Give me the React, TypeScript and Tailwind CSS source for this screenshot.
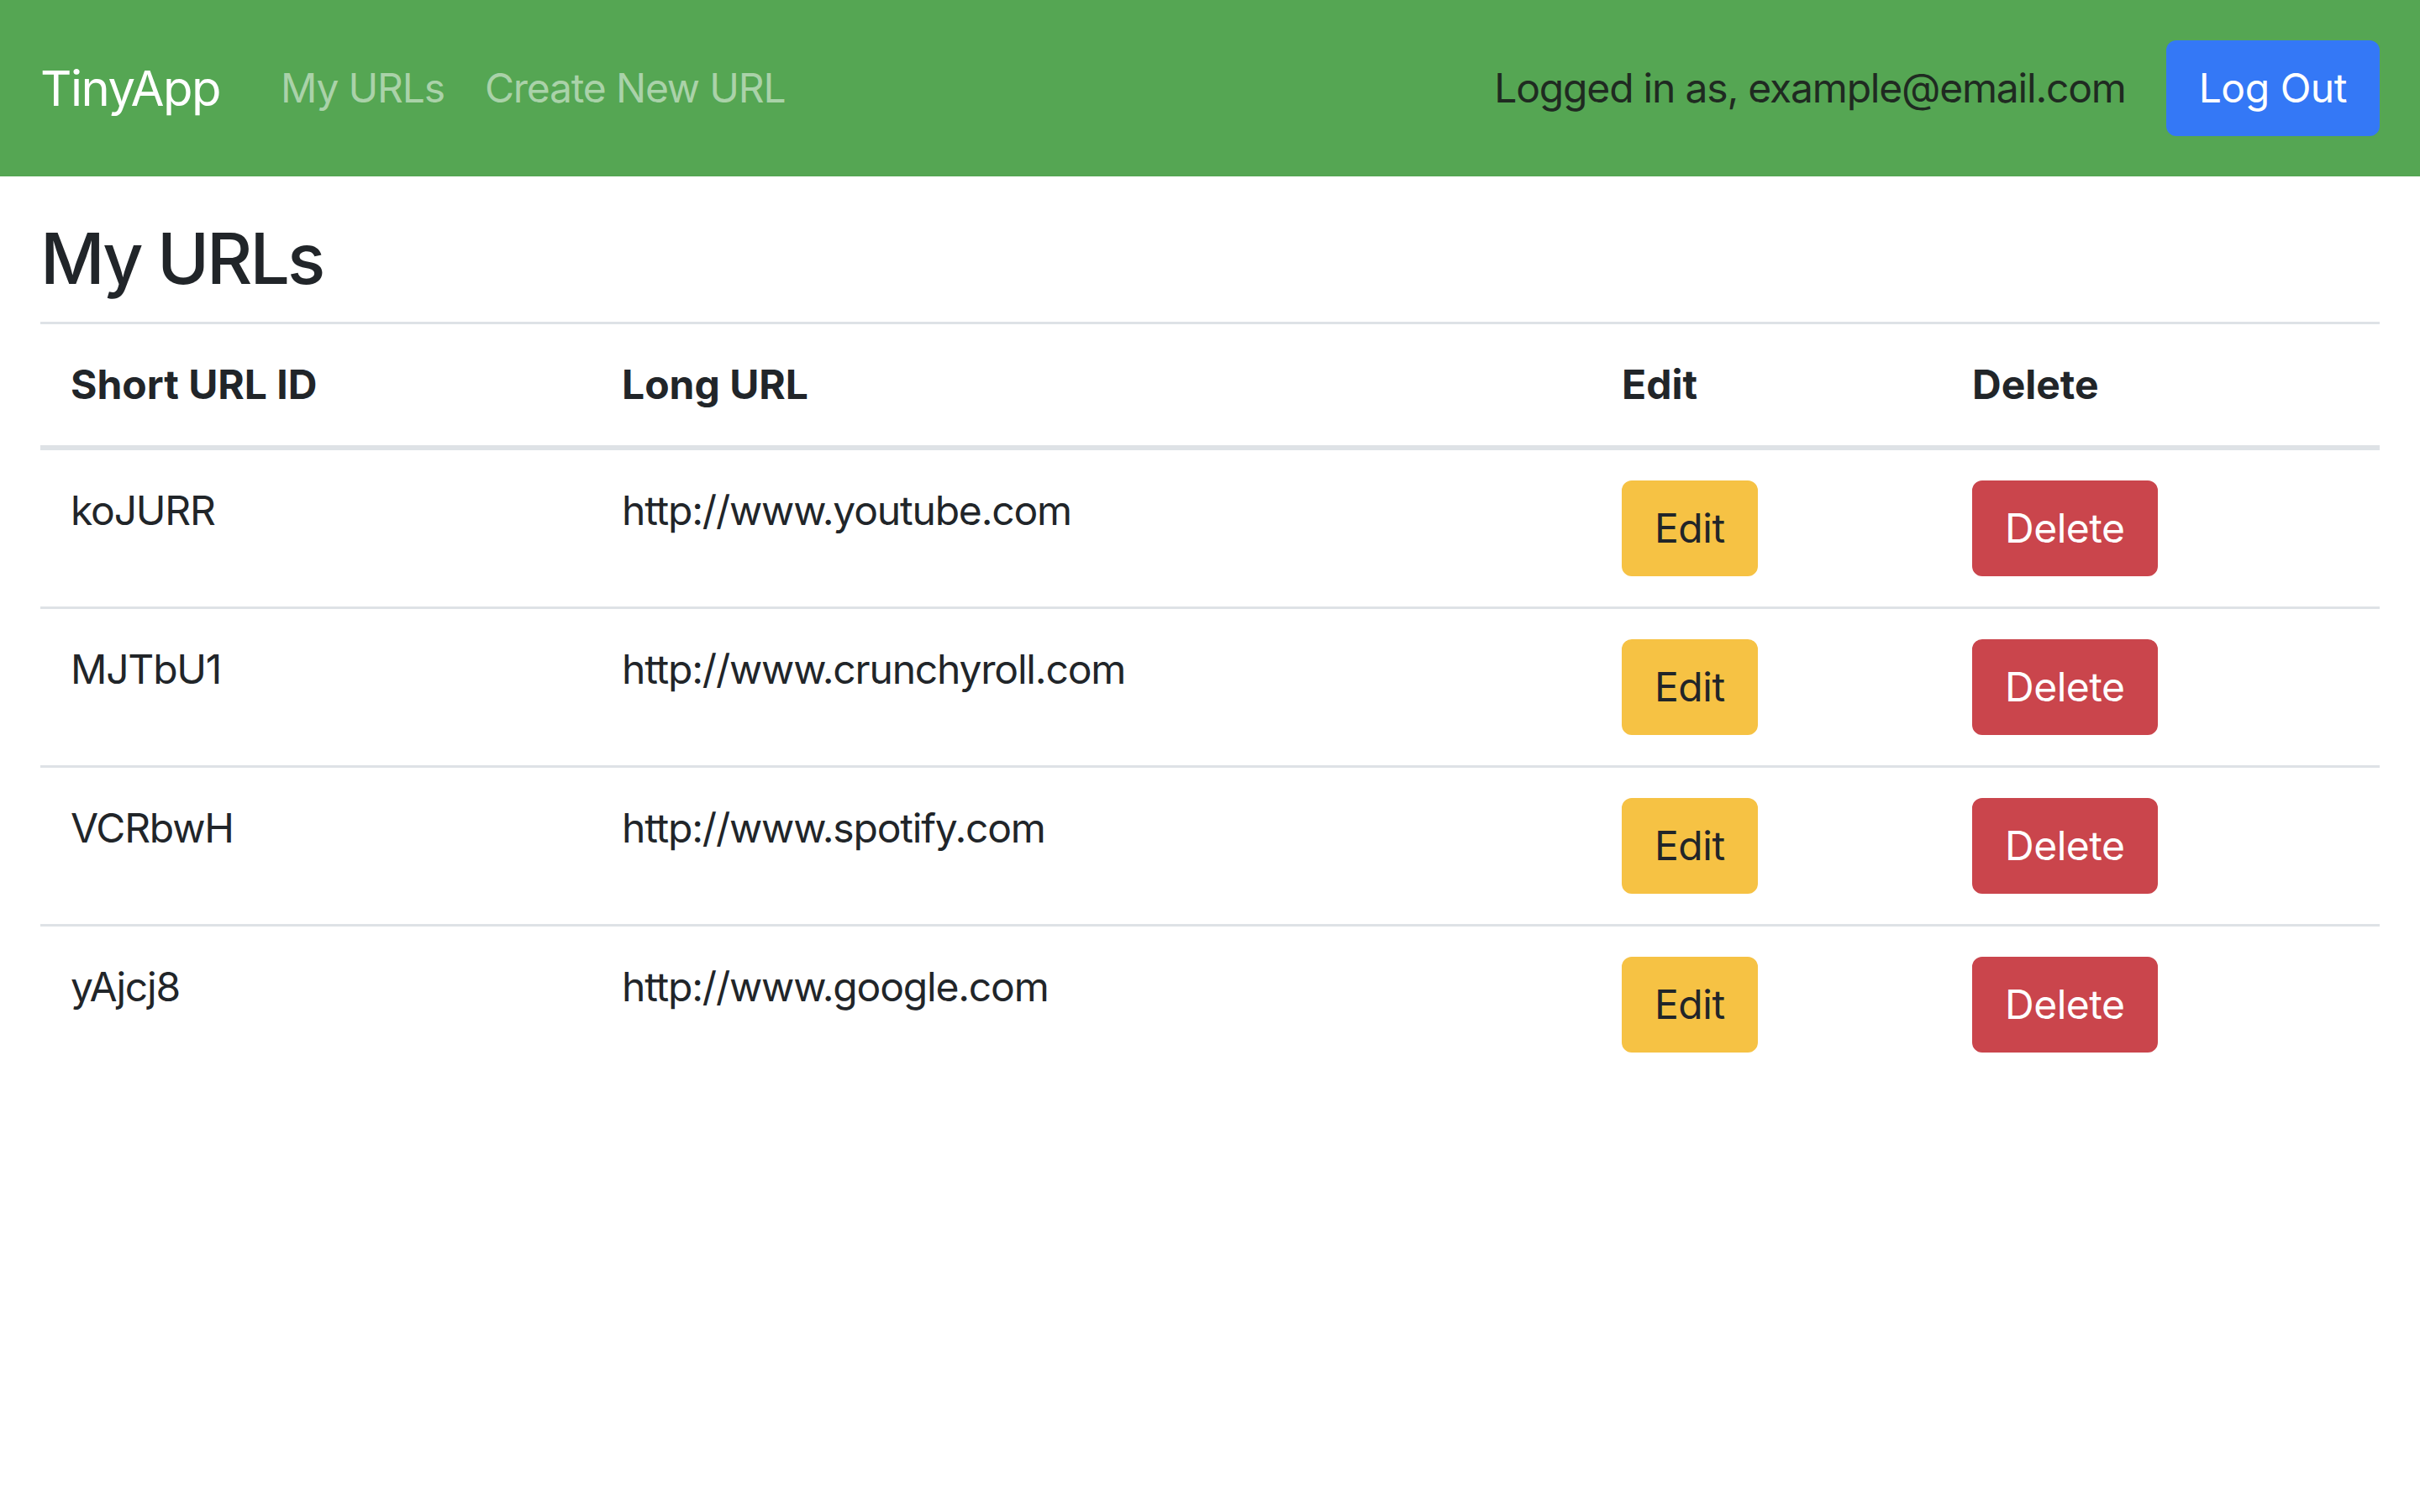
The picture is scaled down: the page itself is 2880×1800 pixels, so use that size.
import React from 'react';

interface UrlEntry {
  id: string;
  longURL: string;
}

const urls: UrlEntry[] = [
  { id: 'koJURR', longURL: 'http://www.youtube.com' },
  { id: 'MJTbU1', longURL: 'http://www.crunchyroll.com' },
  { id: 'VCRbwH', longURL: 'http://www.spotify.com' },
  { id: 'yAjcj8', longURL: 'http://www.google.com' },
];

const Navbar: React.FC = () => (
  <nav className="flex h-[210px] items-center justify-between bg-[#55a653] px-12">
    <div className="flex items-center">
      <a className="mr-12 text-[58px] leading-[90px] tracking-[-1.5px] text-white">TinyApp</a>
      <a className="px-6 text-[#aad2a9]">My URLs</a>
      <a className="px-6 text-[#aad2a9]">Create New URL</a>
    </div>
    <div className="flex items-center">
      <span className="mr-12 text-[#1f2a21]">Logged in as, example@email.com</span>
      <button className="rounded-[12px] border-[3px] border-[#3478f6] bg-[#3478f6] px-9 py-[18px] leading-[72px] tracking-[-0.01em] text-white">
        Log Out
      </button>
    </div>
  </nav>
);

export default function App() {
  return (
    <div className="min-h-screen bg-white font-['Inter',sans-serif] text-[48px] leading-[72px] tracking-tight text-[#212529]">
      <Navbar />

      <main className="px-12">
        <h2 className="mt-12 mb-6 text-[84px] font-medium leading-[1.2] tracking-[-3px]">My URLs</h2>

        <table className="w-full table-fixed border-collapse">
          <colgroup>
            <col className="w-[656px]" />
            <col className="w-[1190px]" />
            <col className="w-[417px]" />
            <col />
          </colgroup>
          <thead>
            <tr>
              <th className="border-t-[3px] border-b-[6px] border-[#dee2e6] p-9 text-left align-bottom font-bold tracking-normal">Short URL ID</th>
              <th className="border-t-[3px] border-b-[6px] border-[#dee2e6] p-9 text-left align-bottom font-bold tracking-normal">Long URL</th>
              <th className="border-t-[3px] border-b-[6px] border-[#dee2e6] p-9 text-left align-bottom font-bold tracking-normal">Edit</th>
              <th className="border-t-[3px] border-b-[6px] border-[#dee2e6] p-9 text-left align-bottom font-bold tracking-normal">Delete</th>
            </tr>
          </thead>
          <tbody>
            {urls.map((url) => (
              <tr key={url.id}>
                <td className="border-t-[3px] border-[#dee2e6] p-9 align-top">{url.id}</td>
                <td className="border-t-[3px] border-[#dee2e6] p-9 align-top">{url.longURL}</td>
                <td className="border-t-[3px] border-[#dee2e6] p-9 align-top">
                  <button className="rounded-[12px] border-[3px] border-[#f6c244] bg-[#f6c244] px-9 py-[18px] leading-[72px] tracking-[-0.01em] text-[#212529]">
                    Edit
                  </button>
                </td>
                <td className="border-t-[3px] border-[#dee2e6] p-9 align-top">
                  <button className="rounded-[12px] border-[3px] border-[#ca454c] bg-[#ca454c] px-9 py-[18px] leading-[72px] tracking-[-0.01em] text-white">
                    Delete
                  </button>
                </td>
              </tr>
            ))}
          </tbody>
        </table>
      </main>
    </div>
  );
}
